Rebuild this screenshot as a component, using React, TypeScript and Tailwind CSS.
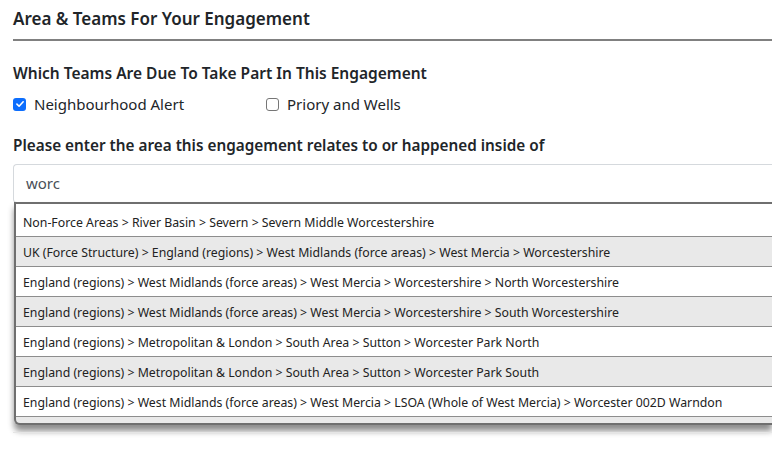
import { ReactElement } from "react";

const results = [
  "Non-Force Areas > River Basin > Severn > Severn Middle Worcestershire",
  "UK (Force Structure) > England (regions) > West Midlands (force areas) > West Mercia > Worcestershire",
  "England (regions) > West Midlands (force areas) > West Mercia > Worcestershire > North Worcestershire",
  "England (regions) > West Midlands (force areas) > West Mercia > Worcestershire > South Worcestershire",
  "England (regions) > Metropolitan & London > South Area > Sutton > Worcester Park North",
  "England (regions) > Metropolitan & London > South Area > Sutton > Worcester Park South",
  "England (regions) > West Midlands (force areas) > West Mercia > LSOA (Whole of West Mercia) > Worcester 002D Warndon",
];

const App = (): ReactElement => {
  return (
    <div
      className="w-full h-[449px] overflow-hidden bg-white pl-[13px] text-[#212529]"
      style={{ fontFamily: '"Noto Sans", "Open Sans", sans-serif' }}
    >
      <h1 className="pt-[7px] h-[39px] text-[17px] font-semibold leading-[24px]">
        Area &amp; Teams For Your Engagement
      </h1>
      <div className="h-[2px] bg-[#808080]" />

      <h2 className="mt-[21px] text-[15.5px] font-semibold leading-[22px]">
        Which Teams Are Due To Take Part In This Engagement
      </h2>
      <div className="mt-[9px] flex items-center text-[15px] leading-[22px]">
        <label className="flex items-center w-[253px] gap-[8px]">
          <span className="flex h-[13px] w-[13px] items-center justify-center rounded-[3px] bg-[#0d6efd]">
            <svg viewBox="0 0 12 12" className="h-[10px] w-[10px]">
              <path d="M2.3 6.2 L4.9 8.7 L9.8 3.4" fill="none" stroke="white" strokeWidth="1.9" strokeLinecap="round" strokeLinejoin="round" />
            </svg>
          </span>
          Neighbourhood Alert
        </label>
        <label className="flex items-center gap-[8px]">
          <span className="h-[13px] w-[13px] rounded-[3px] border border-[#767676] bg-white" />
          Priory and Wells
        </label>
      </div>

      <h2 className="mt-[19px] text-[15.3px] font-semibold leading-[22px]">
        Please enter the area this engagement relates to or happened inside of
      </h2>
      <div className="mt-[8px]">
        <div className="h-[39px] rounded-l-[4px] border border-r-0 border-[#d5d9dd] pl-[12px] flex items-center text-[15px] text-[#495057]">
          worc
        </div>
        <div className="ml-[1px] -mt-[1px] rounded-bl-[6px] border-2 border-r-0 border-[#6f6f6f] bg-[#e9e9e9] pb-[6px] shadow-[0_6px_6px_rgba(0,0,0,0.45)]">
          <div className="h-[3px] bg-white" />
          {results.map((r, i) => (
            <div
              key={r}
              className={`h-[30px] border-b border-[#8d8d8d] pl-[7px] pt-[3px] flex items-center whitespace-nowrap text-[12.3px] text-[#222] ${
                i % 2 === 1 ? "bg-[#e9e9e9]" : "bg-white"
              }`}
            >
              {r}
            </div>
          ))}
        </div>
      </div>
      <div className="mt-[7px] h-px bg-[#e5e5e5]" />
    </div>
  );
};

export default App;
